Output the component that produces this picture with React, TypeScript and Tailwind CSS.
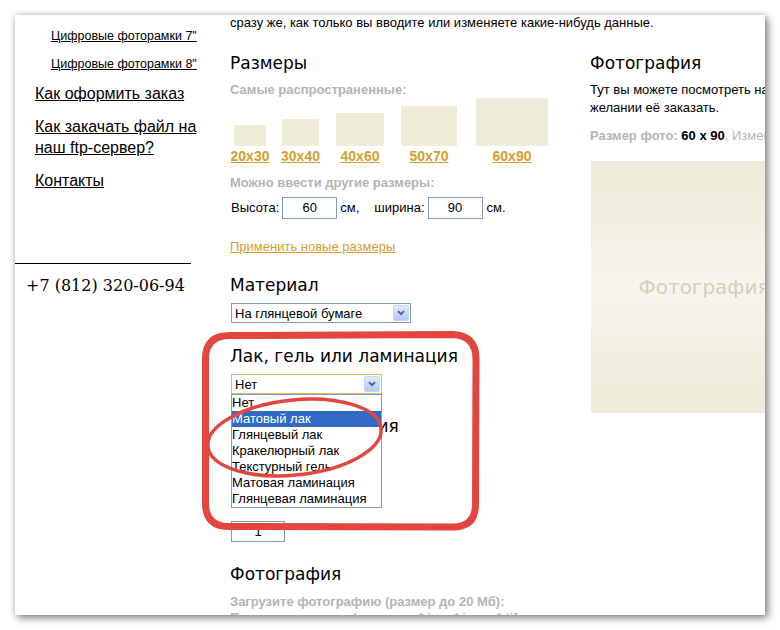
import React from 'react';

/**
 * Order page fragment (photo on canvas), captured mid-scroll with an
 * annotation drawn over the varnish dropdown.
 */

const SIZES = [
  { label: '20x30', w: 'w-[32px]', h: 'h-[21px]', ml: 'ml-[4px]' },
  { label: '30x40', w: 'w-[37px]', h: 'h-[27px]', ml: 'ml-[16px]' },
  { label: '40x60', w: 'w-[48px]', h: 'h-[33px]', ml: 'ml-[17px]' },
  { label: '50x70', w: 'w-[56px]', h: 'h-[40px]', ml: 'ml-[17px]' },
  { label: '60x90', w: 'w-[72px]', h: 'h-[48px]', ml: 'ml-[19px]' },
];

const FINISHES = [
  'Нет',
  'Матовый лак',
  'Глянцевый лак',
  'Кракелюрный лак',
  'Текстурный гель',
  'Матовая ламинация',
  'Глянцевая ламинация',
];

const heading = "font-['DejaVu_Sans',sans-serif] text-[17px] leading-[22px] text-black";
const grayLabel = 'whitespace-nowrap text-[13px] font-bold leading-[16px] text-[#b4b4b4]';

/** XP-style combobox */
function XpSelect({
  value,
  width,
  focused = false,
  children,
}: {
  value: string;
  width: string;
  focused?: boolean;
  children?: React.ReactNode;
}) {
  return (
    <div className={`relative ml-[1px] ${width}`}>
      <div
        className={`flex h-[20px] items-center border bg-white pr-[1px] ${
          focused ? 'border-[#e2b85e]' : 'border-[#7f9db9]'
        }`}
      >
        <span className="flex-1 pl-[3px] text-[13px] leading-none text-black">{value}</span>
        <span className="flex h-[16px] w-[16px] items-center justify-center rounded-[2px] border border-[#c3d3fd] bg-gradient-to-b from-[#e1eafe] to-[#b4c8f5]">
          <svg width="8" height="6" viewBox="0 0 8 6">
            <path d="M1 1.2 L4 4.2 L7 1.2" stroke="#4d6185" strokeWidth="1.9" fill="none" />
          </svg>
        </span>
      </div>
      {children}
    </div>
  );
}

function Sidebar() {
  return (
    <aside className="w-[176px] shrink-0 whitespace-nowrap">
      <div className="pl-[36px] pt-[13px] text-[12.5px] leading-[16px]">
        <a className="block underline">Цифровые фоторамки 7"</a>
        <a className="mt-[12px] block underline">Цифровые фоторамки 8"</a>
      </div>
      <nav className="pl-[20px] text-[16px] leading-[21px]">
        <a className="mt-[11px] block underline">Как оформить заказ</a>
        <a className="mt-[12px] block underline">
          Как закачать файл на
          <br />
          наш ftp-сервер?
        </a>
        <a className="mt-[12px] block underline">Контакты</a>
      </nav>
      <div className="mt-[72px] h-[1px] w-full bg-black" />
      <p className="mt-[11px] pl-[11px] font-['DejaVu_Serif',serif] text-[16px] leading-[22px] text-black">
        +7 (812) 320-06-94
      </p>
    </aside>
  );
}

function MainColumn() {
  return (
    <div className="w-[360px] shrink-0">
      <h2 className={`mt-[21px] ${heading}`}>Размеры</h2>
      <p className={`mt-[8px] ${grayLabel}`}>Самые распространенные:</p>

      <div className="flex items-end">
        {SIZES.map(s => (
          <div key={s.label} className={`flex flex-col items-center ${s.ml} ${s.w}`}>
            <div className={`w-full bg-[#f0ecda] ${s.h}`} />
            <span className="mt-[2px] whitespace-nowrap text-[14px] font-bold leading-[16px] text-[#d49e2f] underline">
              {s.label}
            </span>
          </div>
        ))}
      </div>

      <p className={`mt-[11px] ${grayLabel}`}>Можно ввести другие размеры:</p>
      <div className="mt-[6px] flex items-center text-[13px] text-black">
        <span className="ml-[1px]">Высота:</span>
        <span className="ml-[3px] flex h-[22px] w-[55px] items-center justify-center border border-[#7f9db9]">60</span>
        <span className="ml-[3px]">см,</span>
        <span className="ml-[15px]">ширина:</span>
        <span className="ml-[3px] flex h-[22px] w-[55px] items-center justify-center border border-[#7f9db9]">90</span>
        <span className="ml-[4px]">см.</span>
      </div>

      <a className="mt-[20px] block text-[13px] leading-[16px] text-[#d49e2f] underline">Применить новые размеры</a>

      <h2 className={`mt-[19px] ${heading}`}>Материал</h2>
      <div className="mt-[7px]">
        <XpSelect value="На глянцевой бумаге" width="w-[180px]" />
      </div>

      <h2 className={`mt-[22px] ${heading}`}>Лак, гель или ламинация</h2>
      <div className="relative z-10 mt-[7px]">
        <XpSelect value="Нет" width="w-[151px]" focused>
          <ul className="absolute left-0 top-full w-full border border-[#7f9db9] bg-white text-[13px] leading-[16px] text-black">
            {FINISHES.map((f, i) => (
              <li key={f} className={`h-[16px] ${i === 1 ? 'bg-[#316ac5] text-white' : ''}`}>
                {f}
              </li>
            ))}
          </ul>
        </XpSelect>
      </div>

      <h2 className={`mt-[21px] ${heading}`}>Края и экспозиция</h2>
      <div className="ml-[1px] mt-[84px] flex h-[21px] w-[54px] items-center justify-center border border-[#7f9db9] text-[13px]">
        1
      </div>

      <h2 className={`mt-[21px] ${heading}`}>Фотография</h2>
      <p className={`mt-[9px] ${grayLabel}`}>Загрузите фотографию (размер до 20 Мб):</p>
      <p className={grayLabel}>Поддерживаемые форматы: *.jpg, *.jpeg, *.tif</p>
    </div>
  );
}

function PreviewColumn() {
  return (
    <div className="w-[340px] shrink-0">
      <h2 className={`mt-[21px] ${heading}`}>Фотография</h2>
      <p className="mt-[7px] w-[325px] text-[13px] leading-[18px] text-black">
        Тут вы можете посмотреть на фотографию и при желании её заказать.
      </p>
      <p className="mt-[10px] whitespace-nowrap text-[13px] leading-[18px]">
        <span className="font-bold text-[#b4b4b4]">Размер фото: </span>
        <span className="font-bold text-black">60 x 90</span>
        <span className="text-[#b4b4b4]">, Изменить размер</span>
      </p>
      <div className="ml-[1px] mt-[16px] flex h-[252px] w-[232px] items-center justify-center bg-gradient-to-b from-[#eeead8] via-[#f7f5ed] to-[#eeead8]">
        <span className="ml-[-6px] font-['DejaVu_Sans',sans-serif] text-[20px] text-[#d4d0b6]">Фотография</span>
      </div>
    </div>
  );
}

/** Red marker annotation drawn over the screenshot */
function Annotation() {
  return (
    <svg className="pointer-events-none absolute left-0 top-0 z-20" width="750" height="600" viewBox="0 0 750 600">
      <g transform="translate(-15,-15)" fill="none" stroke="#e2463f" strokeLinecap="round">
        <path
          d="M230 335.5 L452 334.5 Q476.5 335 476 360 L475.5 505 Q475 527.5 452 527 L228 526.5 Q205.5 526 205.5 503 L205.5 358 Q206 335.5 230 335.5 Z"
          strokeWidth="7"
        />
        <ellipse cx="294.5" cy="437.5" rx="87" ry="37.5" transform="rotate(-6 294.5 437.5)" strokeWidth="3.5" />
      </g>
    </svg>
  );
}

export default function App() {
  return (
    <div className="h-[630px] w-[780px] bg-white p-[15px] font-['Liberation_Sans',Arial,sans-serif] text-black">
      <div className="relative h-[600px] w-[750px] overflow-hidden bg-white shadow-[3px_3px_8px_rgba(0,0,0,0.45),0_0_6px_rgba(0,0,0,0.18)]">
        <div className="flex">
          <Sidebar />
          <div className="ml-[39px] flex-1">
            <p className="whitespace-nowrap text-[13px] leading-[16px] text-black">
              сразу же, как только вы вводите или изменяете какие-нибудь данные.
            </p>
            <div className="flex">
              <MainColumn />
              <PreviewColumn />
            </div>
          </div>
        </div>
        <Annotation />
      </div>
    </div>
  );
}
